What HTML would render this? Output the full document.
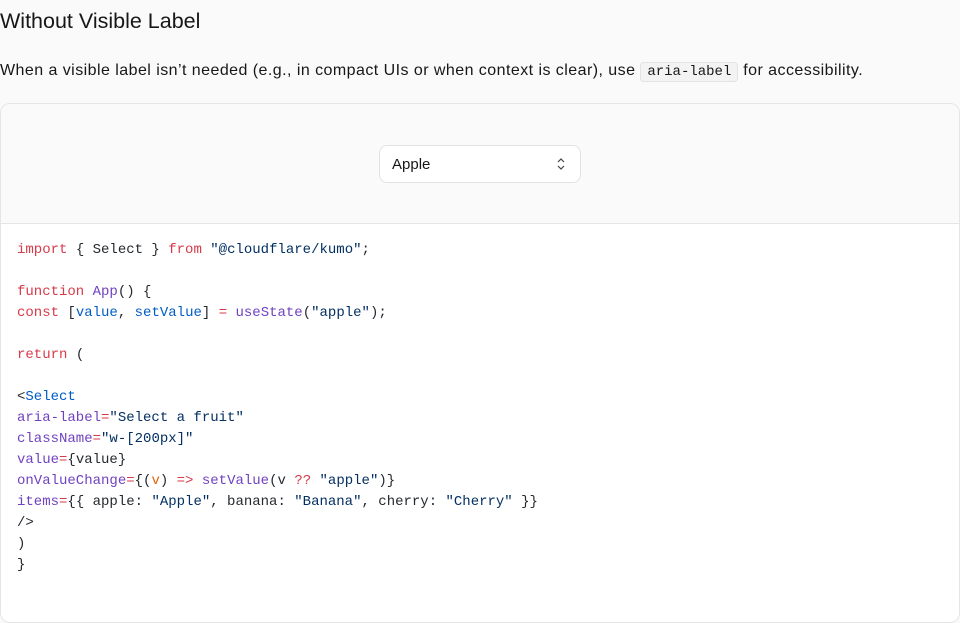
<!DOCTYPE html>
<html><head><style>
*{box-sizing:border-box;margin:0;padding:0}
body{width:960px;height:586px;overflow:hidden;background:#fafafa;font-family:"Liberation Sans",sans-serif;color:#171717}
h2{position:absolute;left:0;top:7px;font-size:21.5px;font-weight:500;line-height:28px;letter-spacing:0px}
p{position:absolute;left:0;top:59px;font-size:16px;line-height:24px;white-space:nowrap;letter-spacing:0.45px}
p code{font-family:"Liberation Mono",monospace;font-size:14px;letter-spacing:0;background:#f3f3f3;border:1px solid #e3e3e3;border-radius:4px;padding:1px 6px}
.card{position:absolute;left:0;top:103px;width:960px;height:520px;border:1px solid #e5e5e5;border-radius:10px;background:#fff;overflow:hidden}
.prev{height:120px;background:#fafafa;border-bottom:1px solid #e5e5e5;position:relative}
.sel{position:absolute;left:378px;top:41px;width:202px;height:38px;background:#fff;border:1px solid #e3e3e3;border-radius:8px;font-size:15px;line-height:38px;padding-left:12px}
.sel svg{position:absolute;right:14px;top:11px}
pre{font-family:"Liberation Mono",monospace;font-size:14px;line-height:21px;padding:16px 0 0 16px;color:#24292e}
.k{color:#d73a49}.f{color:#6f42c1}.s{color:#032f62}.v{color:#005cc5}.o{color:#e36209}
</style></head><body>
<h2>Without Visible Label</h2>
<p>When a visible label isn’t needed (e.g., in compact UIs or when context is clear), use <code>aria-label</code> for accessibility.</p>
<div class="card">
<div class="prev"><div class="sel">Apple<svg width="10" height="14" viewBox="0 0 10 14"><path d="M2 5l3-3 3 3M2 9l3 3 3-3" fill="none" stroke="#444" stroke-width="1.2"/></svg></div></div>
<pre><span class="k">import</span> { Select } <span class="k">from</span> <span class="s">"@cloudflare/kumo"</span>;

<span class="k">function</span> <span class="f">App</span>() {
<span class="k">const</span> [<span class="v">value</span>, <span class="v">setValue</span>] <span class="k">=</span> <span class="f">useState</span>(<span class="s">"apple"</span>);

<span class="k">return</span> (

&lt;<span class="v">Select</span>
<span class="f">aria-label</span><span class="k">=</span><span class="s">"Select a fruit"</span>
<span class="f">className</span><span class="k">=</span><span class="s">"w-[200px]"</span>
<span class="f">value</span><span class="k">=</span>{value}
<span class="f">onValueChange</span><span class="k">=</span>{(<span class="o">v</span>) <span class="k">=&gt;</span> <span class="f">setValue</span>(v <span class="k">??</span> <span class="s">"apple"</span>)}
<span class="f">items</span><span class="k">=</span>{{ apple: <span class="s">"Apple"</span>, banana: <span class="s">"Banana"</span>, cherry: <span class="s">"Cherry"</span> }}
/&gt;
)
}</pre>
</div>
</body></html>
